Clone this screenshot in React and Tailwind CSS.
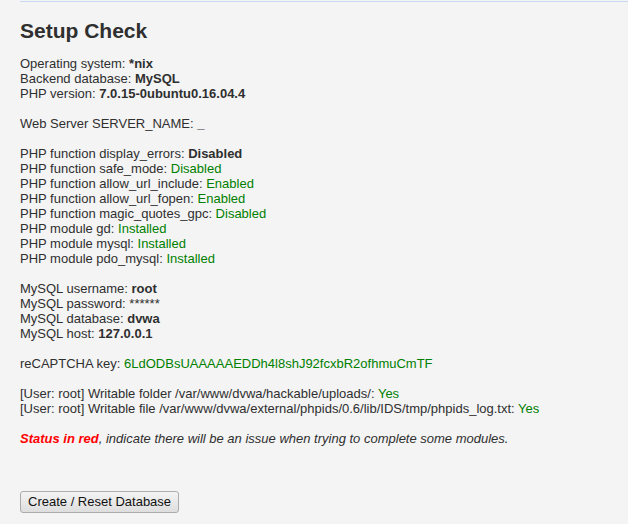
import React from 'react';

const Ok = ({ children }) => <span className="text-[#008000]">{children}</span>;
const B = ({ children }) => <span className="font-bold">{children}</span>;

function App() {
  return (
    <div className="min-h-[524px] bg-[#f4f4f4] pt-px font-['Arial','Liberation_Sans',sans-serif] text-[13px] leading-[15px] text-[#2f2f2f]">
      <div className="ml-[20px] h-px bg-[#c9d9f5]"></div>
      <div className="pl-[20px]">
        <h1 className="mt-[17px] mb-[13px] text-[21px] leading-[24px] font-bold text-[#2f2f2f]">Setup Check</h1>

        <div>Operating system: <B>*nix</B></div>
        <div>Backend database: <B>MySQL</B></div>
        <div>PHP version: <B>7.0.15-0ubuntu0.16.04.4</B></div>
        <div className="h-[15px]"></div>
        <div>Web Server SERVER_NAME: <B>_</B></div>
        <div className="h-[15px]"></div>

        <div>PHP function display_errors: <B>Disabled</B></div>
        <div>PHP function safe_mode: <Ok>Disabled</Ok></div>
        <div>PHP function allow_url_include: <Ok>Enabled</Ok></div>
        <div>PHP function allow_url_fopen: <Ok>Enabled</Ok></div>
        <div>PHP function magic_quotes_gpc: <Ok>Disabled</Ok></div>
        <div>PHP module gd: <Ok>Installed</Ok></div>
        <div>PHP module mysql: <Ok>Installed</Ok></div>
        <div>PHP module pdo_mysql: <Ok>Installed</Ok></div>
        <div className="h-[15px]"></div>

        <div>MySQL username: <B>root</B></div>
        <div>MySQL password: ******</div>
        <div>MySQL database: <B>dvwa</B></div>
        <div>MySQL host: <B>127.0.0.1</B></div>
        <div className="h-[15px]"></div>

        <div>reCAPTCHA key: <Ok>6LdODBsUAAAAAEDDh4l8shJ92fcxbR2ofhmuCmTF</Ok></div>
        <div className="h-[15px]"></div>

        <div>[User: root] Writable folder /var/www/dvwa/hackable/uploads/: <Ok>Yes</Ok></div>
        <div>[User: root] Writable file /var/www/dvwa/external/phpids/0.6/lib/IDS/tmp/phpids_log.txt: <Ok>Yes</Ok></div>
        <div className="h-[15px]"></div>

        <div className="italic">
          <span className="font-bold text-[#ff0000]">Status in red</span>, indicate there will be an issue when trying to complete some modules.
        </div>

        <div className="mt-[45px]">
          <button className="h-[22px] rounded-[3px] border border-[#acacac] bg-gradient-to-b from-[#f4f4f4] to-[#dedede] px-[7px] text-[13px] leading-[18px] text-[#111]">
            Create / Reset Database
          </button>
        </div>
      </div>
    </div>
  );
}

export default App;
